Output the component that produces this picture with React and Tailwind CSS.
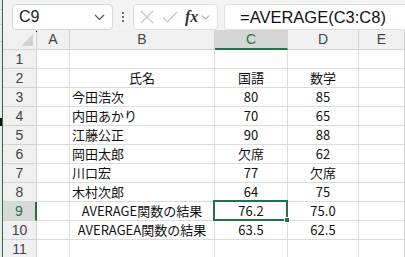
import React from "react";

const cols = ["A", "B", "C", "D", "E"];

const rows = [
  { n: 1, b: "", c: "", d: "" },
  { n: 2, b: "氏名", c: "国語", d: "数学", center: true },
  { n: 3, b: "今田浩次", c: "80", d: "85" },
  { n: 4, b: "内田あかり", c: "70", d: "65" },
  { n: 5, b: "江藤公正", c: "90", d: "88" },
  { n: 6, b: "岡田太郎", c: "欠席", d: "62" },
  { n: 7, b: "川口宏", c: "77", d: "欠席" },
  { n: 8, b: "木村次郎", c: "64", d: "75" },
  { n: 9, b: "AVERAGE関数の結果", c: "76.2", d: "75.0", center: true },
  { n: 10, b: "AVERAGEA関数の結果", c: "63.5", d: "62.5", center: true },
  { n: 11, b: "", c: "", d: "" },
];

function Chevron({ className }) {
  return (
    <svg width="11" height="7" viewBox="0 0 11 7" className={className}>
      <path d="M1 1l4.5 4.5L10 1" fill="none" stroke="currentColor" strokeWidth="1.2" />
    </svg>
  );
}

function FormulaBar() {
  return (
    <div className="h-[37px] bg-[#f3f3f3] flex items-start pt-[4px] pl-[9px] font-['Liberation_Sans',sans-serif]">
      {/* name box */}
      <div className="w-[101px] h-[26px] bg-white border border-[#d6d6d6] rounded-[4px] flex items-center justify-between pl-[6px] pr-[7px]">
        <span className="text-[16px] text-[#222]">C9</span>
        <Chevron className="text-[#555]" />
      </div>
      <div className="w-[20px] h-[26px] flex flex-col items-center justify-center gap-[2px]">
        <span className="w-[2px] h-[2px] bg-[#444] rounded-full" />
        <span className="w-[2px] h-[2px] bg-[#444] rounded-full" />
        <span className="w-[2px] h-[2px] bg-[#444] rounded-full" />
      </div>
      {/* fx box */}
      <div className="w-[85px] h-[26px] bg-white border border-[#e0e0e0] rounded-[4px] flex items-center pl-[6px]">
        <svg width="14" height="14" viewBox="0 0 14 14">
          <path d="M1 1l12 12M13 1L1 13" stroke="#c4c4c4" strokeWidth="1.1" fill="none" />
        </svg>
        <svg width="16" height="14" viewBox="0 0 16 14" className="ml-[8px]">
          <path d="M1 7.5l4.5 4.5L15 2" stroke="#c4c4c4" strokeWidth="1.1" fill="none" />
        </svg>
        <span className="ml-[7px] font-['Liberation_Serif',serif] italic font-bold text-[16px] text-[#333] leading-none">fx</span>
        <Chevron className="ml-[3px] text-[#777] w-[9px]" />
      </div>
      {/* formula */}
      <div className="ml-[6px] flex-1 h-[26px] bg-white border border-[#e0e0e0] border-r-0 rounded-l-[4px] flex items-center pl-[15px]">
        <span className="text-[16.5px] text-[#111]">=AVERAGE(C3:C8)</span>
      </div>
    </div>
  );
}

function Cell({ children, align = "center", className = "" }) {
  const al = align === "left" ? "justify-start pl-[2px]" : "justify-center";
  return (
    <div
      className={`h-[19px] border-r border-b border-[#dcdcdc] flex items-center overflow-hidden whitespace-nowrap text-[13px] text-[#111] ${al} ${className}`}
    >
      {children}
    </div>
  );
}

export default function App() {
  return (
    <div className="w-[405px] h-[257px] overflow-hidden flex bg-white">
      {/* strip of the window behind */}
      <div className="w-[2px] h-full bg-[#eaeaea] flex flex-col">
        <div className="h-[10px] border-b border-[#d0d0d0]" />
        <div className="h-[15px] border-b border-[#d0d0d0]" />
        <div className="h-[17px] border-b border-[#d0d0d0]" />
        <div className="h-[76px]" />
        <div className="h-[8px] w-[3px] bg-[#111]" />
      </div>
      <div className="w-px h-full bg-[#217346]" />
      <div className="flex-1 flex flex-col min-w-0">
        <FormulaBar />
        <div className="grid grid-cols-[34px_33px_145px_73px_71px_1fr] font-['Noto_Sans_CJK_JP',sans-serif]">
          {/* header row */}
          <div className="relative h-[20px] bg-[#f0f0f0] border-r border-b border-[#d4d4d4]">
            <svg width="12" height="12" viewBox="0 0 12 12" className="absolute right-[3px] bottom-[3px]">
              <path d="M12 0L12 12L0 12Z" fill="#d2d2d2" />
            </svg>
            <span className="absolute right-[-1px] top-[1px] w-px h-px bg-[#000]" />
          </div>
          {cols.map((c) => (
            <div
              key={c}
              className={`h-[20px] flex items-center justify-center text-[14px] font-['Liberation_Sans',sans-serif] border-r border-[#d4d4d4] ${
                c === "C"
                  ? "bg-[#d6d6d6] text-[#217346] border-b-2 border-b-[#217346]"
                  : "bg-[#f0f0f0] text-[#444] border-b"
              }`}
            >
              {c}
            </div>
          ))}
          {rows.map((r) => (
            <React.Fragment key={r.n}>
              <div
                className={`h-[19px] flex items-center justify-center text-[14px] font-['Liberation_Sans',sans-serif] border-b border-[#d4d4d4] ${
                  r.n === 9
                    ? "bg-[#d9d9d9] text-[#217346] border-r-2 border-r-[#217346]"
                    : "bg-[#f0f0f0] text-[#444] border-r"
                }`}
              >
                {r.n}
              </div>
              <Cell />
              <Cell align={r.center ? "center" : "left"}>{r.b}</Cell>
              {r.n === 9 ? (
                <Cell className="relative overflow-visible">
                  {r.c}
                  <div className="absolute left-[-2px] top-[-2px] w-[75px] h-[21px] border-2 border-[#217346]">
                    <span className="absolute right-[-4px] bottom-[-4px] w-[6px] h-[6px] bg-[#217346] border border-white" />
                  </div>
                </Cell>
              ) : (
                <Cell>{r.c}</Cell>
              )}
              <Cell>{r.d}</Cell>
              <Cell />
            </React.Fragment>
          ))}
        </div>
      </div>
    </div>
  );
}
